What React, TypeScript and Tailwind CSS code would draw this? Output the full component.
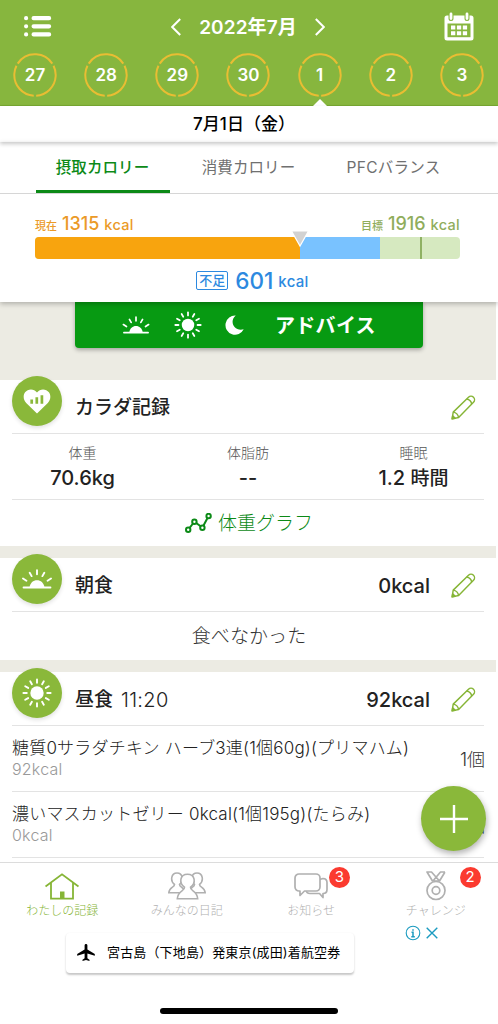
import type { ReactNode } from "react";
import { clsx } from "clsx";

const DAYS = [27, 28, 29, 30, 1, 2, 3];

const FOODS = [
  { name: "糖質0サラダチキン ハーブ3連(1個60g)(プリマハム)", kcal: "92kcal", amount: "1個" },
  { name: "濃いマスカットゼリー 0kcal(1個195g)(たらみ)", kcal: "0kcal", amount: "1個" },
];

const SUN_RAYS = [0, 30, 60, 90, 120, 150, 180, 210, 240, 270, 300, 330];

function SunriseIcon({ className }: { className?: string }) {
  return (
    <svg viewBox="0 0 30 20" className={className} fill="none" stroke="currentColor" strokeWidth="1.9" strokeLinecap="round">
      <path d="M7.500 18.500c.6-4.800 3.800-7.300 7.500-7.300s6.900 2.500 7.500 7.300z" fill="currentColor" stroke="none" />
      <path d="M1.500 18.500h27" strokeWidth="1.800" />
      <path d="M15 1.300v4M7.700 3.800l1.900 3.300M22.300 3.800l-1.900 3.300M1 9.500l3.400 2.200M29 9.500l-3.400 2.200" />
    </svg>
  );
}

function SunIcon({ className }: { className?: string }) {
  return (
    <svg viewBox="0 0 30 30" className={className}>
      <circle cx="15" cy="15" r="6.700" fill="currentColor" />
      {SUN_RAYS.map((deg) => (
        <path
          key={deg}
          d="M15 1.400v3.400"
          stroke="currentColor"
          strokeWidth="1.900"
          strokeLinecap="round"
          transform={`rotate(${deg} 15 15)`}
        />
      ))}
    </svg>
  );
}

function HeartIcon({ className }: { className?: string }) {
  return (
    <svg viewBox="0 0 28 25" className={className}>
      <path
        d="M14 24.6 3.2 13.9C.2 10.9-.1 6 2.1 3.3 4.8-.3 10.8-.9 14 3.6 17.2-.9 23.2-.3 25.9 3.3c2.2 2.7 1.9 7.6-1.1 10.6z"
        fill="currentColor"
      />
      <path d="M8.700 10.500v4.300M13.800 8.300v6.500M18.900 6.300v8.500" stroke="#8ab83a" strokeWidth="2.700" />
    </svg>
  );
}

function PencilIcon() {
  return (
    <svg viewBox="0 0 26 26" className="h-[25px] w-[25px] text-[#86b536]" fill="none" stroke="currentColor" strokeWidth="1.500" strokeLinejoin="round">
      <path d="M1.200 24.800 2.300 17.800 18.200 2.400a3.700 3.700 0 0 1 5.200 0 3.700 3.700 0 0 1 0 5.200L7.900 23.400z" />
      <path d="M2.300 17.800c2.900.5 5.100 2.500 5.600 5.600M16.300 4.200c2.700.5 4.800 2.500 5.200 5.300" />
      <path d="m1.700 21.600 2.700 2.700-3.200.5z" fill="currentColor" />
    </svg>
  );
}

function DayRing({ day }: { day: number }) {
  return (
    <div className="grid h-11 w-11 place-items-center">
      <svg viewBox="0 0 44 44" className="col-start-1 row-start-1 h-11 w-11">
        <circle
          cx="22"
          cy="22"
          r="20.700"
          fill="none"
          stroke="#e9bd33"
          strokeWidth="2"
          pathLength="360"
          strokeDasharray="113 7"
          transform="rotate(93.5 22 22)"
        />
      </svg>
      <span className="col-start-1 row-start-1 text-[17px] leading-none font-semibold text-white">{day}</span>
    </div>
  );
}

interface CardHeaderProps {
  icon: ReactNode;
  title: string;
  time?: string;
  value?: string;
}

function CardHeader({ icon, title, time, value }: CardHeaderProps) {
  return (
    <div className="mx-3 flex h-[54px] items-start border-b border-[#e3e3e3]">
      <div className="-mt-1 flex h-[50px] w-[50px] shrink-0 items-center justify-center rounded-full bg-[#8ab83a] text-white shadow-[0_2px_4px_rgba(0,0,0,0.12)]">
        {icon}
      </div>
      <div className="flex h-[54px] flex-1 items-center pt-0.5 pl-[13px] text-[#222]">
        <span className="text-[19px] font-medium">{title}</span>
        {time && <span className="ml-2 text-[20px] font-light tracking-[0.3px]">{time}</span>}
        {value && <span className="ml-auto text-[20px] font-medium">{value}</span>}
      </div>
      <div className="ml-[21px] flex h-[54px] w-[33px] items-center">
        <PencilIcon />
      </div>
    </div>
  );
}

function Stat({ label, value }: { label: string; value: ReactNode }) {
  return (
    <div className="flex w-[165px] flex-col items-center pt-2">
      <span className="text-[14px] leading-[22px] font-light text-[#555]">{label}</span>
      <span className="text-[20px] leading-7 font-medium text-[#222]">{value}</span>
    </div>
  );
}

interface NavItemProps {
  icon: ReactNode;
  label: string;
  active?: boolean;
  badge?: number;
  badgeClass?: string;
}

function NavItem({ icon, label, active, badge, badgeClass }: NavItemProps) {
  return (
    <div className={clsx("relative flex flex-1 flex-col items-center pt-[7px]", active ? "text-[#86b536]" : "text-[#b0b0b0]")}>
      <div className="flex h-8 items-center">{icon}</div>
      <span className="text-[12px] leading-[18px] font-light">{label}</span>
      {badge && (
        <span
          className={clsx(
            "absolute top-1 flex h-[21px] w-[21px] items-center justify-center rounded-full bg-[#fb3a2f] text-[15px] text-white",
            badgeClass
          )}
        >
          {badge}
        </span>
      )}
    </div>
  );
}

export default function App() {
  return (
    <div className="flex h-[1024px] w-[498px] flex-col overflow-hidden bg-white font-['Inter','Noto_Sans_CJK_JP',sans-serif]">
      {/* Month and day picker */}
      <header className="h-[106px] shrink-0 border-b border-[#78a832] bg-[#87b63e] text-white">
        <div className="flex h-[53px] items-center justify-between pr-6 pl-6">
          <svg viewBox="0 0 28 21" className="h-[21px] w-7" stroke="currentColor" strokeWidth="4.200" strokeLinecap="round">
            <path d="M2.100 2.200h0M2.100 10.300h0M2.100 18.400h0M9.600 2.200h15.500M9.600 10.300h15.500M9.600 18.400h15.500" />
          </svg>
          <div className="flex items-center gap-[18px]">
            <svg viewBox="0 0 10 18" className="h-[18px] w-2.5" fill="none" stroke="currentColor" strokeWidth="2">
              <path d="M9.200 1 1.200 9l8 8" />
            </svg>
            <span className="pt-[3px] text-[19px] font-semibold tracking-[0.1px]">2022年7月</span>
            <svg viewBox="0 0 10 18" className="h-[18px] w-2.5" fill="none" stroke="currentColor" strokeWidth="2">
              <path d="m.8 1 8 8-8 8" />
            </svg>
          </div>
          <svg viewBox="0 0 30 29" className="h-[29px] w-[30px]">
            <path d="M3 3.500h24a2.500 2.500 0 0 1 2.500 2.500v20a2.500 2.500 0 0 1-2.500 2.500H3A2.500 2.500 0 0 1 .5 26V6A2.500 2.500 0 0 1 3 3.500z" fill="currentColor" />
            <path d="M3.500 11.500h23v13.700h-23z" fill="#87b63e" />
            <path d="M7 13.500h4.300v4H7zM12.900 13.500h4.300v4h-4.300zM18.800 13.500h4.300v4h-4.300zM7 19.200h4.300v4H7zM12.900 19.200h4.300v4h-4.300zM18.800 19.200h4.300v4h-4.300z" fill="currentColor" />
            <path d="M7 2.200v4.400M23 2.200v4.400" stroke="#87b63e" strokeWidth="5" strokeLinecap="round" />
            <path d="M7 2v4.500M23 2v4.500" stroke="currentColor" strokeWidth="2.800" strokeLinecap="round" />
          </svg>
        </div>
        <div className="flex justify-between pr-3.5 pl-[13px]">
          {DAYS.map((day) => (
            <div key={day} className="flex flex-col items-center">
              <DayRing day={day} />
              {day === 1 && (
                <svg viewBox="0 0 14 7" className="mt-0.5 h-[7px] w-3.5" fill="#fff">
                  <path d="M7 0l7 7H0z" />
                </svg>
              )}
            </div>
          ))}
        </div>
      </header>
      <div className="relative z-20 flex h-9 shrink-0 items-center justify-center pt-0.5 pr-2.5 text-[17px] font-medium text-black shadow-[0_2px_4px_rgba(0,0,0,0.22)]">
        <span>7月1日（金）</span>
      </div>

      {/* Calorie summary */}
      <section className="relative z-10 h-[160px] shrink-0 bg-white shadow-[0_2px_5px_rgba(0,0,0,0.25)]">
        <div className="flex h-[52px] justify-center gap-3 border-b border-[#d6d6d6] pt-px text-[15.500px] tracking-[0.1px] text-[#707070]">
          <div className="flex h-[50px] w-[134px] items-center justify-center border-b-[3.500px] border-[#0c8a17] pt-[3px] pr-px font-medium text-[#0c8a17]">
            摂取カロリー
          </div>
          <div className="flex h-[50px] w-[134px] items-center justify-center pr-px">消費カロリー</div>
          <div className="flex h-[50px] w-[134px] items-center justify-center pr-[3px] tracking-[0.250px]">PFCバランス</div>
        </div>
        <div className="mx-[35px] flex h-[43px] w-[425px] items-baseline justify-between pt-4 font-medium">
          <div className="text-[#eb9a28]">
            <span className="mr-[5px] text-[11px]">現在</span>
            <span className="text-[18px]">1315</span>
            <span className="ml-[5px] text-[14.500px] tracking-[0.3px]">kcal</span>
          </div>
          <div className="text-[#90ad5c]">
            <span className="mr-[5px] text-[11px]">目標</span>
            <span className="text-[18px]">1916</span>
            <span className="ml-[5px] text-[14.500px] tracking-[0.3px]">kcal</span>
          </div>
        </div>
        <div className="relative mx-[35px] h-[22px] w-[425px]">
          <div className="flex h-full overflow-hidden rounded-[4px] bg-[#d6e9c0]">
            <div className="w-[264.500px] bg-[#f8a40e]" />
            <div className="w-[80.500px] bg-[#79c2ff]" />
            <div className="ml-10 w-0.5 bg-[#8fb163]" />
          </div>
          <svg viewBox="0 0 20 18" className="absolute -top-[7px] left-[255px] h-[18px] w-5">
            <path d="M1.500 1h17L10 16z" fill="#d2d2d2" stroke="#fff" strokeWidth="1.200" />
          </svg>
        </div>
        <div className="flex h-[42px] items-center justify-center pl-[7px] pt-px font-medium text-[#2c89e0]">
          <span className="mr-[7px] flex h-[19px] w-8 items-center justify-center rounded-[2px] border border-[#2c89e0] text-[13px]">不足</span>
          <span className="text-[22.500px]">601</span>
          <span className="mt-1 ml-[5px] text-[15px] tracking-[0.3px]">kcal</span>
        </div>
      </section>

      <main className="h-[560px] w-[496px] shrink-0 overflow-hidden bg-[#ecebe3]">
        <div className="mb-8 ml-[75px] flex h-[46px] w-[348px] items-center rounded-b-[4px] bg-[#079a12] pl-[47px] text-white shadow-[0_2px_4px_rgba(0,0,0,0.3)]">
          <SunriseIcon className="h-[18px] w-7" />
          <SunIcon className="ml-6 h-7 w-7" />
          <svg viewBox="0 0 20 20" className="ml-[23px] h-5 w-5" fill="currentColor">
            <path d="M10.700.5C3.900 6.200 8.900 16.800 18.700 14.300A9.600 9.600 0 1 1 10.700.5z" />
          </svg>
          <span className="ml-[30px] pt-0.5 text-[20px] font-bold tracking-[0.3px]">アドバイス</span>
        </div>

        {/* Body record */}
        <section className="mb-3 h-[166px] bg-white">
          <CardHeader title="カラダ記録" icon={<HeartIcon className="h-[25px] w-7" />} />
          <div className="flex h-[65px] justify-between">
            <Stat label="体重" value="70.6kg" />
            <Stat label="体脂肪" value="--" />
            <Stat
              label="睡眠"
              value={
                <>
                  1.2 <span className="text-[19px]">時間</span>
                </>
              }
            />
          </div>
          <div className="mx-3 flex h-[47px] items-center justify-center border-t border-[#e3e3e3] pl-0.5 text-[19px] font-light text-[#0c8a17]">
            <svg viewBox="0 0 27 20" className="mr-[6px] h-5 w-[27px]" fill="none" stroke="currentColor" strokeWidth="2">
              <circle cx="3.200" cy="16.700" r="2.200" />
              <circle cx="9.400" cy="8.700" r="2.200" />
              <circle cx="17.400" cy="14.700" r="2.200" />
              <circle cx="23.600" cy="3" r="2.200" />
              <path d="m4.600 14.900 3.400-4.400M11.200 10l4.400 3.300M18.400 12.700l4.100-7.700" />
            </svg>
            <span className="pt-[3px]">体重グラフ</span>
          </div>
        </section>

        {/* Breakfast */}
        <section className="mb-3 h-[102px] bg-white">
          <CardHeader title="朝食" value="0kcal" icon={<SunriseIcon className="h-5 w-[30px]" />} />
          <div className="flex h-[48px] items-center justify-center pt-[3px] pl-0.5 text-[19px] font-light tracking-[0.1px] text-[#333]">
            食べなかった
          </div>
        </section>

        {/* Lunch */}
        <section className="h-[192px] bg-white">
          <CardHeader title="昼食" time="11:20" value="92kcal" icon={<SunIcon className="h-[30px] w-[30px]" />} />
          {FOODS.map((food) => (
            <div key={food.name} className="mx-3 flex h-[66px] items-center justify-between border-b border-[#e3e3e3] font-light">
              <div>
                <div className="text-[17px] leading-[21px] tracking-[0.2px] whitespace-nowrap text-[#222]">{food.name}</div>
                <div className="text-[16px] leading-[21px] tracking-[0.2px] text-[#999]">{food.kcal}</div>
              </div>
              <span className="-mr-px pt-0.5 text-[18px] text-[#333]">{food.amount}</span>
            </div>
          ))}
        </section>
      </main>

      <button className="absolute top-[786px] left-[421px] z-10 flex h-[65px] w-[65px] items-center justify-center rounded-full bg-[#8ab83a] text-white shadow-[1px_3px_6px_rgba(0,0,0,0.3)]">
        <svg viewBox="0 0 28 28" className="h-7 w-7" stroke="currentColor" strokeWidth="2.400">
          <path d="M14 0v28M0 14h28" />
        </svg>
      </button>

      {/* Bottom navigation */}
      <nav className="relative z-10 flex h-[60px] shrink-0 border-t border-[#dcdcdc] bg-white">
        <NavItem
          active
          label="わたしの記録"
          icon={
            <svg viewBox="0 0 34 27" className="h-[27px] w-[34px]" fill="none" stroke="currentColor" strokeWidth="1.800">
              <path d="M.5 13.500 17 1.300l16.500 12.200M6 10v15.700h22V10" />
              <path d="M15 18.500h4.500v7H15z" fill="currentColor" stroke="none" />
            </svg>
          }
        />
        <NavItem
          label="みんなの日記"
          icon={
            <svg viewBox="0 0 38 28" className="h-7 w-[38px]" fill="#fff" stroke="currentColor" strokeWidth="1.600">
              <path d="M6.500 12.500C2 9 3 1 9 1s7 8 2.500 11.500c0 3 5 2.500 5.500 8.300H.8c.5-6 5.700-5.300 5.700-8.300zM26.500 12.500C22 9 23 1 29 1s7 8 2.500 11.500c0 3 5.200 2.300 5.700 8.300H21c.5-5.800 5.500-5.300 5.500-8.300z" />
              <path d="M16.500 15.200C10.500 11 12 2.300 19.500 2.300S28.500 11 22.500 15.200c-.3 4.300 6.700 3 7.200 11.600H9.300c.5-8.600 7.500-7.300 7.200-11.600z" />
            </svg>
          }
        />
        <NavItem
          label="お知らせ"
          badge={3}
          badgeClass="left-[80px]"
          icon={
            <svg viewBox="0 0 34 26" className="h-[26px] w-[34px]" fill="#fff" stroke="currentColor" strokeWidth="1.700" strokeLinejoin="round">
              <path d="M12 10.500V17a4 4 0 0 0 4 3.500h9.500l3.500 4V20.500c2.500 0 4-1.500 4-4V9.500c0-2.500-1.500-4-4-4z" />
              <path d="M5 1h17a4 4 0 0 1 4 4v9a4 4 0 0 1-4 4H10.500l-4.500 4.500V18H5a4 4 0 0 1-4-4V5a4 4 0 0 1 4-4z" />
            </svg>
          }
        />
        <NavItem
          label="チャレンジ"
          badge={2}
          badgeClass="left-[86px]"
          icon={
            <svg viewBox="0 0 22 30" className="h-[30px] w-[22px]" fill="none" stroke="currentColor" strokeWidth="1.700" strokeLinejoin="round">
              <path d="M2 1h4.500l8 9h-7zM20 1h-4.500L11.500 5.800M20 1l-5.500 9M11 6.200 8 10" />
              <circle cx="11" cy="19.500" r="9" />
              <circle cx="11" cy="19.500" r="3.800" />
            </svg>
          }
        />
      </nav>

      {/* Ad banner */}
      <div className="flex h-[54px] shrink-0 items-start">
        <div className="mt-[11px] ml-[66px] flex h-10 w-[288px] items-center rounded-[4px] bg-white pl-[11px] text-[13px] text-black shadow-[0_1.500px_2px_rgba(0,0,0,0.22)]">
          <svg viewBox="0 0 18 18" className="mr-[12px] h-[18px] w-[18px]" fill="currentColor">
            <path d="M17.800 11.800v-1.700L10.400 5.600V1.400C10.400.600 9.800 0 9 0S7.600.600 7.600 1.400v4.200L.2 10.100v1.700l7.400-2.200v4.700l-2.100 1.500V17L9 16l3.500 1v-1.200l-2.100-1.500V9.600z" />
          </svg>
          <span className="tracking-[0.150px] whitespace-nowrap">宮古島（下地島）発東京(成田)着航空券</span>
        </div>
        <div className="mt-[3px] ml-[51px] flex gap-[5px] text-[#1b9bc0]">
          <svg viewBox="0 0 16 16" className="h-4 w-4" fill="none" stroke="currentColor">
            <circle cx="8" cy="8" r="6.800" strokeWidth="1.100" />
            <path d="M8 4.200v1.500M6.500 7.200H8v4.500M6.300 11.800h3.500" strokeWidth="1.500" />
          </svg>
          <svg viewBox="0 0 12 16" className="h-4 w-3" stroke="currentColor" strokeWidth="1.400">
            <path d="m.700 2.700 10.600 10.600M11.300 2.700.700 13.300" />
          </svg>
        </div>
      </div>
      <div className="mx-auto mt-8 h-[6px] w-[178px] shrink-0 rounded-full bg-black" />
    </div>
  );
}
